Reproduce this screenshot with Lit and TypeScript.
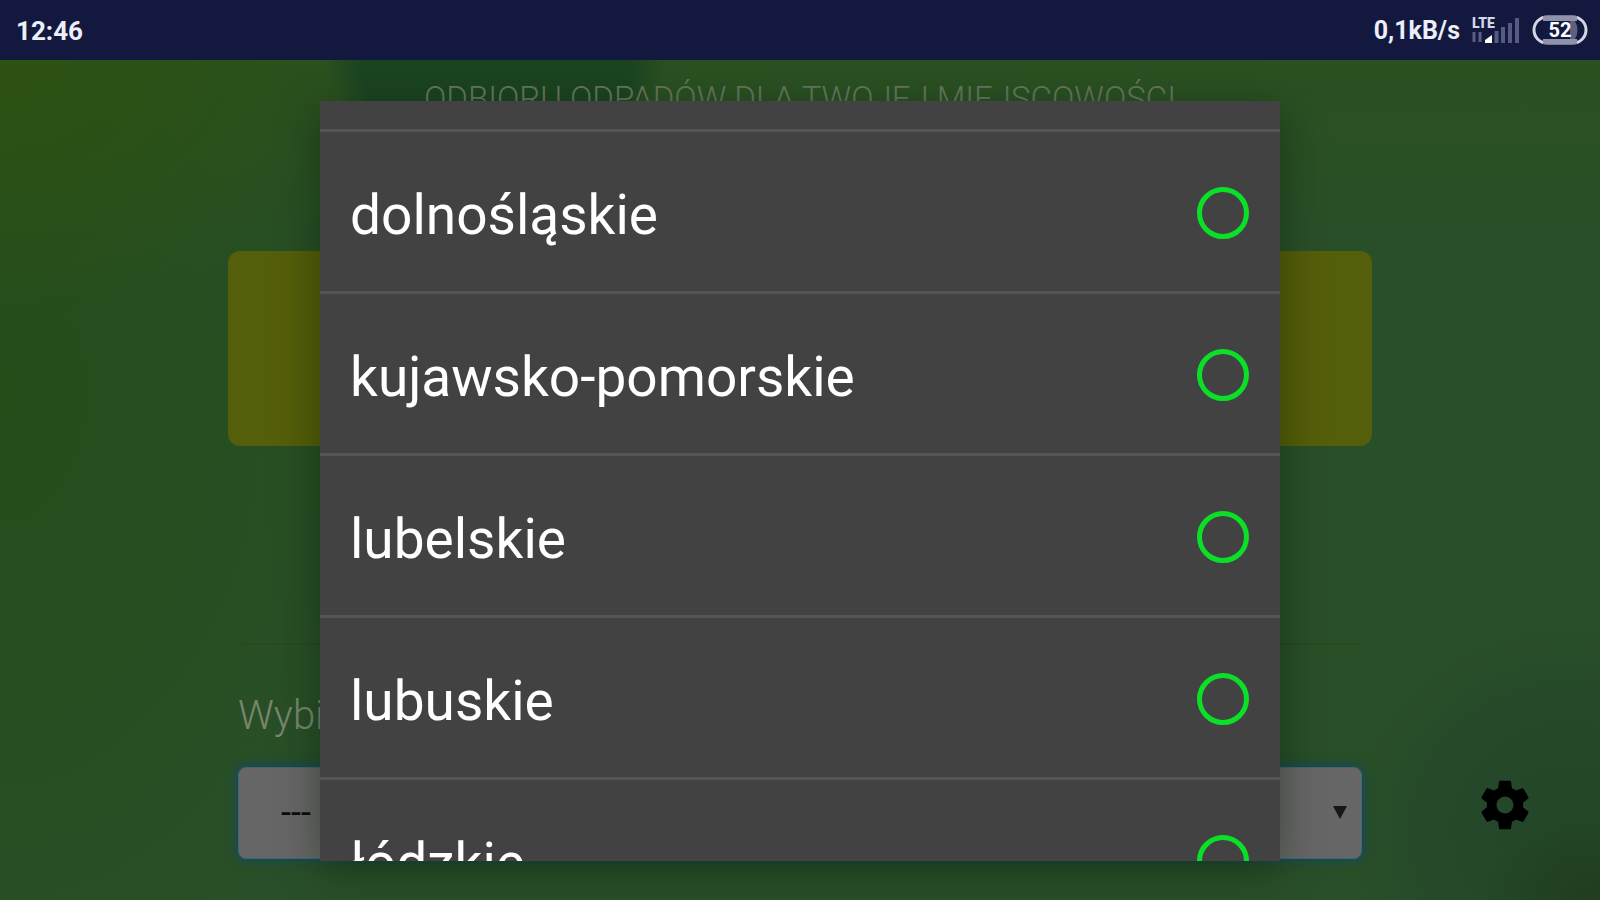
import { LitElement, html, css } from "lit";
import { customElement } from "lit/decorators.js";

const REGIONS = ["dolnośląskie", "kujawsko-pomorskie", "lubelskie", "lubuskie", "łódzkie"];

@customElement("status-bar")
class StatusBar extends LitElement {
  static styles = css`
    :host {
      display: flex;
      align-items: center;
      justify-content: space-between;
      height: 60px;
      padding: 0 12px 0 16px;
      box-sizing: border-box;
      background: #13183e;
      color: #eceef8;
      font: 700 26px/32px Roboto, sans-serif;
    }
    .side {
      display: flex;
      align-items: center;
      gap: 12px;
    }
    .clock,
    .rate {
      padding-top: 2px;
    }
    .rate {
      font-size: 25px;
    }
    svg {
      display: block;
    }
    .tiny {
      font: 900 14px Roboto, sans-serif;
      fill: #d4d6e6;
    }
    .level {
      font: 700 20px Roboto, sans-serif;
      fill: #fff;
    }
  `;

  render() {
    return html`
      <time class="clock">12:46</time>
      <div class="side">
        <span class="rate">0,1kB/s</span>
        <svg width="48" height="30" viewBox="0 0 48 30" role="img" aria-label="LTE">
          <text class="tiny" x="0" y="13">LTE</text>
          <path d="M2 17v10M8 17v10" stroke="#5b5f84" stroke-width="3" />
          <path d="M13 28v-3l7-5v8z" fill="#fff" />
          <path d="M24.500 28V16M31 28V12M38 28V8M45 28V3" stroke="#555a80" stroke-width="4" />
        </svg>
        <svg width="56" height="30" viewBox="0 0 56 30" role="img" aria-label="52%">
          <rect x="2" y="2" width="52" height="26" rx="13" fill="#13183e" stroke="#d4d6e2" stroke-width="3" />
          <path d="M11 1h34v5H11zM11 24h34v5H11z" fill="#9092ab" />
          <path d="M38 6h5q5 9 0 18h-5z" fill="#5d6080" />
          <text class="level" x="28" y="22" text-anchor="middle">52</text>
        </svg>
      </div>
    `;
  }
}

@customElement("region-dialog")
class RegionDialog extends LitElement {
  static styles = css`
    :host {
      display: block;
      box-sizing: border-box;
      padding-top: 28px;
      overflow: hidden;
      background: #424242;
      color: #fff;
      box-shadow: 0 8px 40px rgba(0, 20, 0, 0.4);
      font: 400 55px/64px Roboto, sans-serif;
    }
    .row {
      display: flex;
      align-items: center;
      justify-content: space-between;
      height: 162px;
      box-sizing: border-box;
      border-top: 3px solid #545454;
      padding: 2px 31px 0 30px;
    }
    .name {
      padding-top: 4px;
    }
    .ring {
      appearance: none;
      flex: none;
      width: 52px;
      height: 52px;
      margin: 0;
      border: 5px solid #0be028;
      border-radius: 50%;
    }
    .ring:checked {
      background: radial-gradient(#0be028 45%, transparent 50%);
    }
  `;

  render() {
    return html`${REGIONS.map(
      (name) => html`
        <label class="row">
          <span class="name">${name}</span>
          <input class="ring" type="radio" name="region" value=${name} />
        </label>
      `
    )}`;
  }
}

@customElement("app-root")
class AppRoot extends LitElement {
  static styles = css`
    :host {
      display: flex;
      flex-direction: column;
      height: 100vh;
      overflow: hidden;
      font-family: Roboto, sans-serif;
    }
    .stage {
      flex: 1;
      min-height: 0;
      display: grid;
      grid-template: minmax(0, 1fr) / minmax(0, 1fr);
      background:
        radial-gradient(ellipse 170px 110px at 31% 0%, #1b4421 0%, #1b4421 80%, transparent 100%),
        radial-gradient(ellipse 120px 80px at 100% 100%, #213c20 0%, transparent 100%),
        radial-gradient(ellipse 220px 210px at 98% 92%, #234528 0%, #25492a 60%, transparent 100%),
        radial-gradient(ellipse 380px 260px at 0% 0%, #2e5212 0%, transparent 100%),
        radial-gradient(ellipse 420px 620px at 0% 40%, #244d1a 0%, transparent 100%),
        linear-gradient(#2b5121 0%, #294f28 20%, #294f28 100%);
    }
    .page,
    .layer {
      grid-area: 1 / 1;
    }
    .page {
      display: grid;
      grid-template-columns: 1fr minmax(0, 1144px) 1fr;
    }
    .content {
      grid-column: 2;
      display: flex;
      flex-direction: column;
      color: #78866f;
    }
    .title {
      margin: 19px 0 0;
      font-weight: 300;
      font-size: 33px;
      line-height: 40px;
      text-align: center;
      text-transform: uppercase;
      color: #66775f;
    }
    .banner {
      height: 195px;
      margin-top: 132px;
      border-radius: 12px;
      background: #555e0a;
    }
    .rule {
      align-self: stretch;
      height: 2px;
      margin: 197px 10px 0;
      border: 0;
      background: #284922;
    }
    .field {
      display: flex;
      flex-direction: column;
      padding: 47px 10px 0;
      gap: 27px;
    }
    .caption {
      font-weight: 300;
      font-size: 40px;
      line-height: 48px;
    }
    .picker {
      display: grid;
      align-items: center;
    }
    .select {
      grid-area: 1 / 1;
      appearance: none;
      height: 92px;
      padding: 0 42px;
      border: 1px solid #3d6684;
      border-radius: 8px;
      background: #666;
      color: #0c0c0c;
      box-shadow: 0 0 8px 4px #1d4a49;
      font: 400 36px Roboto, sans-serif;
    }
    .arrow {
      grid-area: 1 / 1;
      justify-self: end;
      margin-right: 15px;
      pointer-events: none;
    }
    .settings {
      grid-column: 3;
      align-self: end;
      justify-self: center;
      padding: 0;
      margin: 0 0 66px 38px;
      border: 0;
      background: none;
    }
    svg {
      display: block;
    }
    .layer {
      display: flex;
      justify-content: center;
      padding: 41px 0 39px;
      z-index: 1;
    }
    .dialog {
      width: 60%;
    }
  `;

  render() {
    return html`
      <status-bar></status-bar>
      <main class="stage">
        <div class="page">
          <div class="content">
            <h1 class="title">Odbioru odpadów dla Twojej miejscowości</h1>
            <div class="banner"></div>
            <hr class="rule" />
            <div class="field">
              <label class="caption" for="region">Wybierz województwo</label>
              <div class="picker">
                <select class="select" id="region">
                  <option>---</option>
                </select>
                <svg class="arrow" width="14" height="16" viewBox="0 0 14 16" aria-hidden="true">
                  <path d="M0 1h14L7 14z" fill="#161616" />
                </svg>
              </div>
            </div>
          </div>
          <button class="settings" aria-label="Ustawienia">
            <svg width="58" height="58" viewBox="0 0 24 24">
              <path
                d="M19.430 12.980c.04-.32.07-.64.07-.98s-.03-.66-.07-.98l2.110-1.650c.19-.15.24-.42.12-.64l-2-3.460c-.12-.22-.39-.3-.61-.22l-2.490 1c-.52-.4-1.080-.73-1.690-.98l-.38-2.650C14.460 2.180 14.250 2 14 2h-4c-.25 0-.46.18-.49.42l-.38 2.650c-.61.25-1.170.59-1.690.98l-2.490-1c-.23-.09-.49 0-.61.22l-2 3.460c-.13.22-.07.49.12.64l2.110 1.650c-.04.32-.07.65-.07.98s.03.66.07.98l-2.110 1.650c-.19.15-.24.42-.12.64l2 3.460c.12.22.39.3.61.22l2.490-1c.52.4 1.080.73 1.690.98l.38 2.650c.03.24.24.42.49.42h4c.25 0 .46-.18.49-.42l.38-2.650c.61-.25 1.170-.59 1.690-.98l2.490 1c.23.09.49 0 .61-.22l2-3.460c.12-.22.07-.49-.12-.64l-2.110-1.650zM12 15.500c-1.930 0-3.500-1.570-3.500-3.500s1.570-3.500 3.500-3.500 3.500 1.570 3.500 3.500-1.570 3.500-3.500 3.500z"
              />
            </svg>
          </button>
        </div>
        <div class="layer">
          <region-dialog class="dialog" role="dialog" aria-label="Województwo"></region-dialog>
        </div>
      </main>
    `;
  }
}
